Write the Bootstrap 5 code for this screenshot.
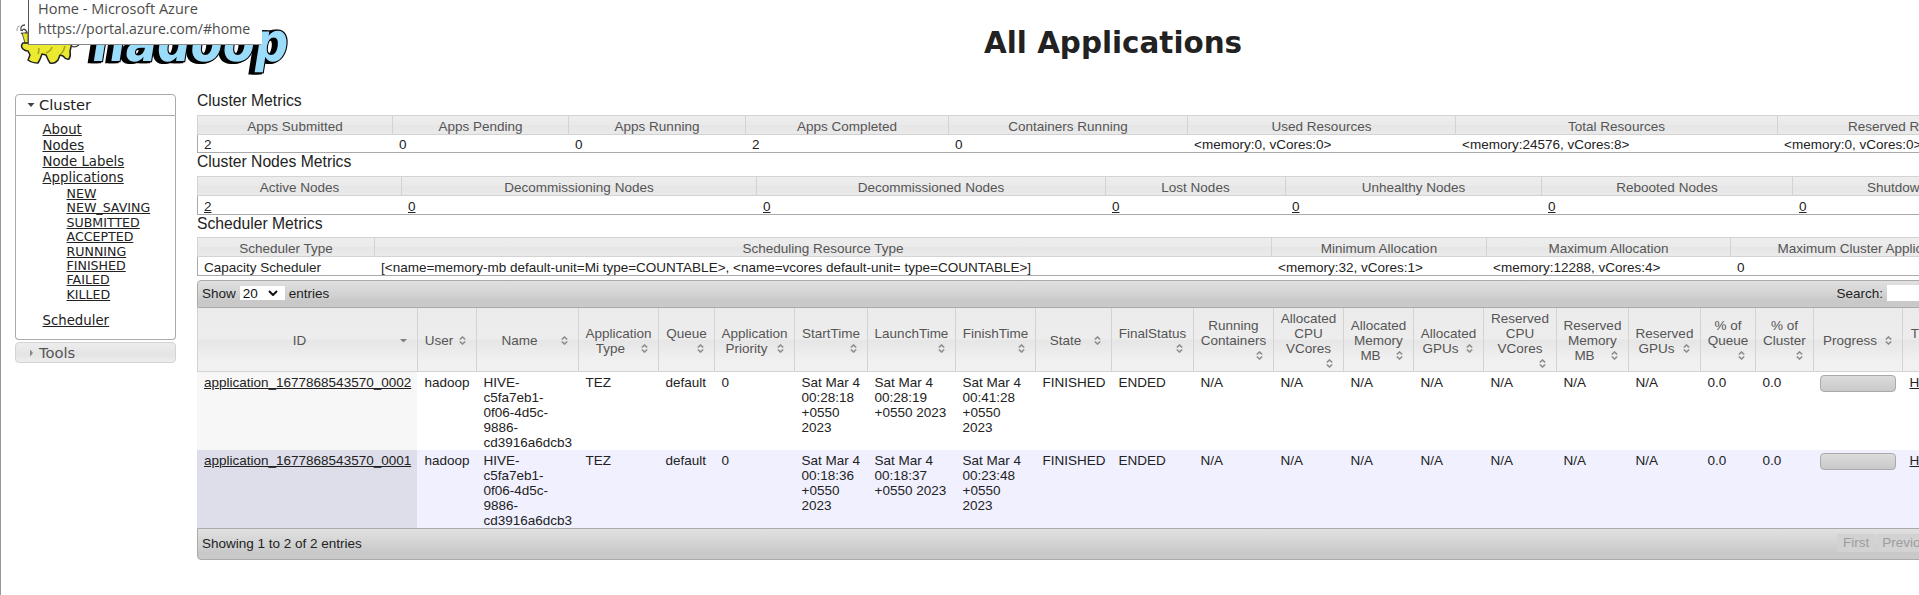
<!DOCTYPE html>
<html lang="en">
<head>
<meta charset="utf-8">
<title>All Applications</title>
<link href="https://cdn.jsdelivr.net/npm/bootstrap@5.3.0/dist/css/bootstrap.min.css" rel="stylesheet">
<script src="https://cdn.jsdelivr.net/npm/bootstrap@5.3.0/dist/js/bootstrap.bundle.min.js"></script>
<style>
html, body { height: 595px; overflow: hidden; }
body { font: 13.5px/15px "Liberation Sans", Arial, sans-serif; color: #222; background: #fff; border-left: 1px solid #999; }
a, a:hover { color: #222; text-decoration: underline; }
.topbar { height: 91px; }
.logo { width: 320px; height: 91px; }
.wordmark { filter: drop-shadow(-3px 0 0 #000) drop-shadow(-2px 1px 0 #000); }
.topbar h1 { font: bold 29.4px/36px "DejaVu Sans", Verdana, sans-serif; color: #222; margin: 25px 0 0 663px; white-space: nowrap; }
.tab-tip { left: 28px; top: -10px; width: 234px; height: 55px; background: #fff; border: 1px solid #555; border-right-color: #fff; border-bottom-color: #888; color: #4c4c4c; font: 14.5px/20px "Open Sans", sans-serif; padding: 8px 0 0 9px; white-space: nowrap; }
.tab-tip .url { font-size: 14.1px; }
.side { width: 161px; margin: 3px 0 0 14px; font-family: "DejaVu Sans", Verdana, sans-serif; }
.side .head { font-size: 14.7px; line-height: 20px; height: 22px; border: 1px solid #aaa; border-radius: 4px 4px 0 0; padding-left: 11px; }
.side .head svg { width: 8px; height: 8px; margin-right: 4px; }
.side .body { border: 1px solid #aaa; border-top: 0; border-radius: 0 0 4px 4px; height: 224px; padding: 6px 0 0 26.5px; font-size: 13.3px; line-height: 16px; }
.side .states { padding: 1px 0 0 24px; margin-bottom: 11px; font-size: 12.6px; line-height: 14.4px; }
.side .tools { margin-top: 2px; height: 21px; line-height: 19px; border-color: #d3d3d3; border-radius: 4px; color: #555; background: linear-gradient(#ededed, #e4e4e4 60%, #eee); }
.main { width: 1847px; margin-left: 21px; }
.main h2 { font-size: 15.7px; line-height: 18px; margin: 0; color: #222; font-weight: 400; }
.grid { table-layout: fixed; width: 1847px; border-collapse: separate; border-spacing: 0; }
.grid th { font-weight: 400; color: #555; text-align: center; vertical-align: middle; border: 1px solid #d3d3d3; border-right: 0; padding: 0 6px; white-space: nowrap; }
.metric th { height: 20px; padding-top: 2px; background: linear-gradient(#ededed, #eaeaea 50%, #e6e6e6 51%, #eaeaea); }
.metric td { height: 19px; padding: 2px 6px 0 7px; border-bottom: 1px solid #aaa; white-space: nowrap; line-height: 15px; }
.metric td:first-child { border-left: 1px solid #aaa; padding-left: 6px; }
.metric.first td { height: 18px; padding-top: 1px; }
.bar { background: linear-gradient(#e0e0e0, #d4d4d4 45%, #c8c8c8 80%, #cacaca); border: 1px solid #aaa; }
.bar.top { height: 28px; border-radius: 4px 4px 0 0; margin-top: 4px; padding: 0 0 2px 4px; }
.bar.bottom { height: 32px; border-radius: 0 0 4px 4px; padding: 0 0 2px 4px; }
.len { width: 45px; height: 14px; margin: 0 4px; background: #fff; color: #111; padding: 0 7px 0 3px; }
.len svg { width: 10px; height: 6px; }
.find { width: 156px; height: 16px; background: #fff; margin-left: 4px; }
.apps th { height: 64px; border-top: 0; padding: 2px 6px 0 6px; background: linear-gradient(#ebebeb, #ededed 48%, #e6e6e6 52%, #f1f1f1 85%); }
.apps th span { float: right; width: 16px; height: 15px; display: flex; align-items: center; justify-content: center; }
.apps th svg { width: 7px; height: 9px; }
.apps td { height: 78px; padding: 3px 0 0 7.5px; vertical-align: top; white-space: nowrap; }
.apps tr.b td { background: #f0f0ff; }
.apps td:first-child { background: #f7f7f7; padding-left: 7px; }
.apps tr.b td:first-child { background: #dedeea; }
.meter { width: 76px; height: 17px; margin-left: -1px; border: 1px solid #aaa; border-radius: 4px; background: linear-gradient(#dcdcdc, #c9c9c9); }
.pages { width: 206px; color: #9d9d9d; }
.pages div { height: 18px; line-height: 18px; padding: 0 6px; margin-right: 1px; background: #d2d2d2; }
</style>
</head>
<body>
<svg class="d-none">
  <symbol id="both" viewBox="0 0 7 9"><path d="M.8 3.500 3.500 1 6.200 3.500M.8 5.500 3.500 8 6.200 5.500" fill="none" stroke="#8c8c8c" stroke-width="1.600"/></symbol>
  <symbol id="desc" viewBox="0 0 7 9"><path d="M0 3h7L3.500 6.500z" fill="#808080"/></symbol>
</svg>
<header class="topbar d-flex">
  <svg class="logo flex-shrink-0" viewBox="1 0 320 91">
    <path d="M17 31q0-5 3-5" fill="none" stroke="#aaa" stroke-width="1.200"/>
    <path d="M21 31q-1-6 4-6M21 33q3 2 6-1-3-5-5-1" fill="none" stroke="#444" stroke-width="1.300"/>
    <path d="M22 33l6 0v12l-3-2z" fill="#e5e32c" stroke="#333" stroke-width=".8"/>
    <path d="M28 43l-5 0q-3 3 0 6 2 2 5 2l2 4-2 5q4 3 10 3 2-3 4-9l4 1q2 5 4 8 5 1 8-3l2-5 3 1q3 4 6 3 2-3 1-8 1-4 2-8z" fill="#ecea30" stroke="#222" stroke-width="1.500" stroke-linejoin="round"/>
    <path d="M38 54q1-2 1-6M46 53q5-2 6-6M61 54q3-3 4-8" fill="none" stroke="#a5a31f" stroke-width="1.500"/>
    <path d="M71 46q4 2 8-1" fill="none" stroke="#444" stroke-width="1.300"/>
    <g class="wordmark">
      <text x="0" y="0" transform="translate(90 60.500) skewX(-9)" textLength="196" lengthAdjust="spacingAndGlyphs" font-family="DejaVu Sans" font-weight="bold" font-size="54" fill="#9bdcfb" stroke="#000" stroke-width="2.600" paint-order="stroke">hadoop</text>
    </g>
  </svg>
  <h1>All Applications</h1>
</header>
<div class="tab-tip position-absolute">Home - Microsoft Azure<br><span class="url">https://portal.azure.com/#home</span></div>

<div class="d-flex align-items-start">
  <nav class="side flex-shrink-0">
    <div class="head d-flex align-items-center"><svg viewBox="0 0 8 8"><path d="M.5 2h7L4 6z" fill="#444"/></svg>Cluster</div>
    <div class="body">
      <a href="#">About</a><br><a href="#">Nodes</a><br><a href="#">Node Labels</a><br><a href="#">Applications</a>
      <div class="states"><a href="#">NEW</a><br><a href="#">NEW_SAVING</a><br><a href="#">SUBMITTED</a><br><a href="#">ACCEPTED</a><br><a href="#">RUNNING</a><br><a href="#">FINISHED</a><br><a href="#">FAILED</a><br><a href="#">KILLED</a></div>
      <a href="#">Scheduler</a>
    </div>
    <div class="head tools d-flex align-items-center"><svg viewBox="0 0 8 8"><path d="M3 .5v7L6 4z" fill="#888"/></svg>Tools</div>
  </nav>

  <main class="main flex-shrink-0">
    <h2 style="height:24px;padding-top:1px">Cluster Metrics</h2>
    <table class="grid metric first">
      <colgroup><col style="width:195px"><col style="width:176px"><col style="width:177px"><col style="width:203px"><col style="width:239px"><col style="width:268px"><col style="width:322px"><col style="width:267px"></colgroup>
      <tr><th>Apps Submitted</th><th>Apps Pending</th><th>Apps Running</th><th>Apps Completed</th><th>Containers Running</th><th>Used Resources</th><th>Total Resources</th><th>Reserved Resources</th></tr>
      <tr><td>2</td><td>0</td><td>0</td><td>2</td><td>0</td><td>&lt;memory:0, vCores:0&gt;</td><td>&lt;memory:24576, vCores:8&gt;</td><td>&lt;memory:0, vCores:0&gt;</td></tr>
    </table>
    <h2 style="height:23px">Cluster Nodes Metrics</h2>
    <table class="grid metric">
      <colgroup><col style="width:204px"><col style="width:355px"><col style="width:349px"><col style="width:180px"><col style="width:256px"><col style="width:251px"><col style="width:252px"></colgroup>
      <tr><th>Active Nodes</th><th>Decommissioning Nodes</th><th>Decommissioned Nodes</th><th>Lost Nodes</th><th>Unhealthy Nodes</th><th>Rebooted Nodes</th><th>Shutdown Nodes</th></tr>
      <tr><td><a href="#">2</a></td><td><a href="#">0</a></td><td><a href="#">0</a></td><td><a href="#">0</a></td><td><a href="#">0</a></td><td><a href="#">0</a></td><td><a href="#">0</a></td></tr>
    </table>
    <h2 style="height:22px">Scheduler Metrics</h2>
    <table class="grid metric">
      <colgroup><col style="width:177px"><col style="width:897px"><col style="width:215px"><col style="width:244px"><col style="width:314px"></colgroup>
      <tr><th>Scheduler Type</th><th>Scheduling Resource Type</th><th>Minimum Allocation</th><th>Maximum Allocation</th><th>Maximum Cluster Application Priority</th></tr>
      <tr><td>Capacity Scheduler</td><td>[&lt;name=memory-mb default-unit=Mi type=COUNTABLE&gt;, &lt;name=vcores default-unit= type=COUNTABLE&gt;]</td><td>&lt;memory:32, vCores:1&gt;</td><td>&lt;memory:12288, vCores:4&gt;</td><td>0</td></tr>
    </table>

    <div class="bar top d-flex align-items-center">
      <span>Show</span>
      <div class="len d-flex align-items-center justify-content-between"><span>20</span><svg viewBox="0 0 10 6"><path d="M1 1l4 4 4-4" fill="none" stroke="#111" stroke-width="2"/></svg></div>
      <span>entries</span>
      <span class="ms-auto">Search:</span><div class="find"></div>
    </div>
    <table class="grid apps">
      <colgroup><col style="width:220px"><col style="width:59px"><col style="width:102px"><col style="width:80px"><col style="width:56px"><col style="width:80px"><col style="width:73px"><col style="width:88px"><col style="width:80px"><col style="width:76px"><col style="width:82px"><col style="width:80px"><col style="width:70px"><col style="width:70px"><col style="width:70px"><col style="width:73px"><col style="width:72px"><col style="width:72px"><col style="width:55px"><col style="width:58px"><col style="width:89px"><col style="width:68px"><col style="width:74px"></colgroup>
      <tr>
        <th><span><svg><use href="#desc"/></svg></span>ID</th>
        <th>User<span><svg><use href="#both"/></svg></span></th>
        <th>Name<span><svg><use href="#both"/></svg></span></th>
        <th>Application<br>Type<span><svg><use href="#both"/></svg></span></th>
        <th>Queue<span><svg><use href="#both"/></svg></span></th>
        <th>Application<br>Priority<span><svg><use href="#both"/></svg></span></th>
        <th>StartTime<span><svg><use href="#both"/></svg></span></th>
        <th>LaunchTime<span><svg><use href="#both"/></svg></span></th>
        <th>FinishTime<span><svg><use href="#both"/></svg></span></th>
        <th>State<span><svg><use href="#both"/></svg></span></th>
        <th>FinalStatus<span><svg><use href="#both"/></svg></span></th>
        <th>Running<br>Containers<span><svg><use href="#both"/></svg></span></th>
        <th>Allocated<br>CPU<br>VCores<span><svg><use href="#both"/></svg></span></th>
        <th>Allocated<br>Memory<br>MB<span><svg><use href="#both"/></svg></span></th>
        <th>Allocated<br>GPUs<span><svg><use href="#both"/></svg></span></th>
        <th>Reserved<br>CPU<br>VCores<span><svg><use href="#both"/></svg></span></th>
        <th>Reserved<br>Memory<br>MB<span><svg><use href="#both"/></svg></span></th>
        <th>Reserved<br>GPUs<span><svg><use href="#both"/></svg></span></th>
        <th>% of<br>Queue<span><svg><use href="#both"/></svg></span></th>
        <th>% of<br>Cluster<span><svg><use href="#both"/></svg></span></th>
        <th>Progress<span><svg><use href="#both"/></svg></span></th>
        <th>Tracking<br>UI<span><svg><use href="#both"/></svg></span></th>
        <th>Blacklisted<br>Nodes</th>
      </tr>
      <tr>
        <td><a href="#">application_1677868543570_0002</a></td><td>hadoop</td><td>HIVE-<br>c5fa7eb1-<br>0f06-4d5c-<br>9886-<br>cd3916a6dcb3</td><td>TEZ</td><td>default</td><td>0</td>
        <td>Sat Mar 4<br>00:28:18<br>+0550<br>2023</td><td>Sat Mar 4<br>00:28:19<br>+0550 2023</td><td>Sat Mar 4<br>00:41:28<br>+0550<br>2023</td><td>FINISHED</td><td>ENDED</td>
        <td>N/A</td><td>N/A</td><td>N/A</td><td>N/A</td><td>N/A</td><td>N/A</td><td>N/A</td><td>0.0</td><td>0.0</td><td><div class="meter"></div></td><td><a href="#">History</a></td><td>0</td>
      </tr>
      <tr class="b">
        <td><a href="#">application_1677868543570_0001</a></td><td>hadoop</td><td>HIVE-<br>c5fa7eb1-<br>0f06-4d5c-<br>9886-<br>cd3916a6dcb3</td><td>TEZ</td><td>default</td><td>0</td>
        <td>Sat Mar 4<br>00:18:36<br>+0550<br>2023</td><td>Sat Mar 4<br>00:18:37<br>+0550 2023</td><td>Sat Mar 4<br>00:23:48<br>+0550<br>2023</td><td>FINISHED</td><td>ENDED</td>
        <td>N/A</td><td>N/A</td><td>N/A</td><td>N/A</td><td>N/A</td><td>N/A</td><td>N/A</td><td>0.0</td><td>0.0</td><td><div class="meter"></div></td><td><a href="#">History</a></td><td>0</td>
      </tr>
    </table>
    <div class="bar bottom d-flex align-items-center">
      <span>Showing 1 to 2 of 2 entries</span>
      <div class="pages d-flex ms-auto"><div>First</div><div>Previous</div></div>
    </div>
  </main>
</div>
</body>
</html>
